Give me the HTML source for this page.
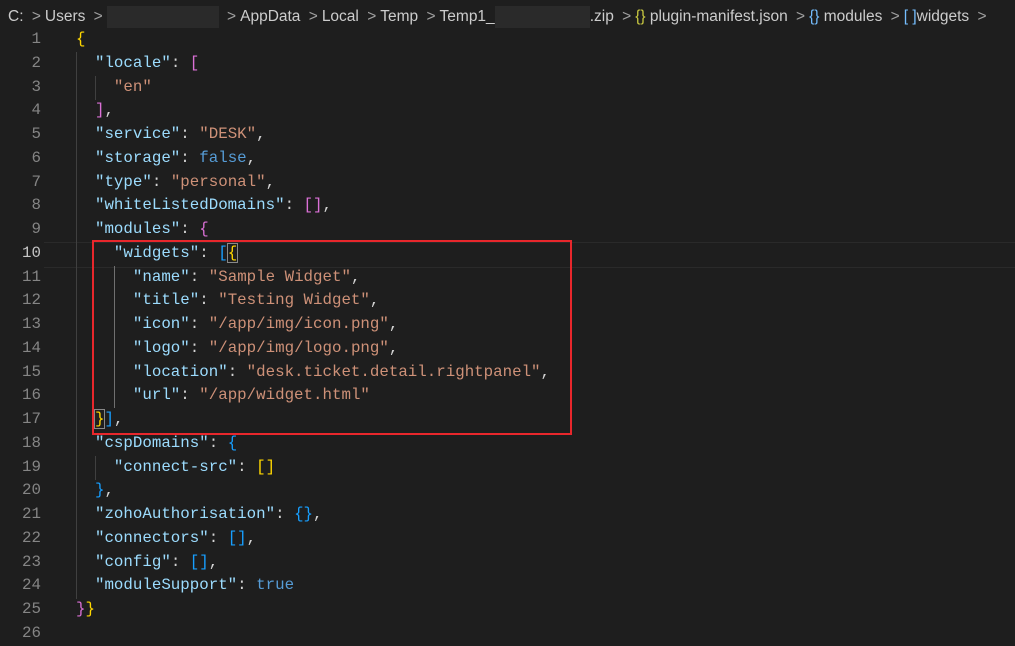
<!DOCTYPE html>
<html><head><meta charset="utf-8"><style>
html,body{margin:0;padding:0;background:#1e1e1e;width:1015px;height:630px;overflow:hidden}
.bc{position:absolute;top:5px;left:8px;height:24px;font:15.5px "Liberation Sans",sans-serif;color:#cccccc;white-space:nowrap;line-height:24px}
.bc .s{color:#a0a0a0;margin:0 4px}
.red{display:inline-block;width:112px;height:22px;background:#2a2a2a;vertical-align:middle}
.code{position:absolute;top:28px;left:0;font:15.8px "Liberation Mono",monospace;line-height:23.75px}
.ln{position:absolute;left:0;width:41px;text-align:right;color:#858585}
.tx{position:absolute;left:76px;top:0;color:#d4d4d4;white-space:pre}
.k{color:#9cdcfe}.v{color:#ce9178}.b{color:#569cd6}
.g{color:#ffd700}.p{color:#da70d6}.u{color:#179fff}
.guide{position:absolute;width:1px;background:#404040}
</style></head><body>
<div class="bc">C: <span class="s">&gt;</span>Users <span class="s">&gt;</span><span class="red"></span> <span class="s">&gt;</span>AppData <span class="s">&gt;</span>Local <span class="s">&gt;</span>Temp <span class="s">&gt;</span>Temp1_<span class="red" style="width:95px"></span>.zip <span class="s">&gt;</span><span style="color:#cbcb41">{}</span> plugin-manifest.json <span class="s">&gt;</span><span style="color:#75beff">{}</span> modules <span class="s">&gt;</span><span style="color:#75beff">[ ]</span>widgets <span class="s">&gt;</span></div>
<div style="position:absolute;left:44px;top:242px;width:971px;height:24px;border-top:1px solid #2a2a2a;border-bottom:1px solid #2a2a2a"></div>
<div class="guide" style="left:76px;top:52px;height:547px"></div>
<div class="guide" style="left:95px;top:76px;height:24px"></div>
<div class="guide" style="left:114px;top:266px;height:142px;background:#707070"></div>
<div class="guide" style="left:95px;top:456px;height:24px"></div>
<div class="code"><div class="ln" style="top:0">1</div><div class="ln" style="top:23.75px">2</div><div class="ln" style="top:47.5px">3</div><div class="ln" style="top:71.25px">4</div><div class="ln" style="top:95px">5</div><div class="ln" style="top:118.75px">6</div><div class="ln" style="top:142.5px">7</div><div class="ln" style="top:166.25px">8</div><div class="ln" style="top:190px">9</div><div class="ln" style="top:213.75px;color:#c6c6c6">10</div><div class="ln" style="top:237.5px">11</div><div class="ln" style="top:261.25px">12</div><div class="ln" style="top:285px">13</div><div class="ln" style="top:308.75px">14</div><div class="ln" style="top:332.5px">15</div><div class="ln" style="top:356.25px">16</div><div class="ln" style="top:380px">17</div><div class="ln" style="top:403.75px">18</div><div class="ln" style="top:427.5px">19</div><div class="ln" style="top:451.25px">20</div><div class="ln" style="top:475px">21</div><div class="ln" style="top:498.75px">22</div><div class="ln" style="top:522.5px">23</div><div class="ln" style="top:546.25px">24</div><div class="ln" style="top:570px">25</div><div class="ln" style="top:593.75px">26</div><div class="tx"><span class="g">{</span>
  <span class="k">"locale"</span>: <span class="p">[</span>
    <span class="v">"en"</span>
  <span class="p">]</span>,
  <span class="k">"service"</span>: <span class="v">"DESK"</span>,
  <span class="k">"storage"</span>: <span class="b">false</span>,
  <span class="k">"type"</span>: <span class="v">"personal"</span>,
  <span class="k">"whiteListedDomains"</span>: <span class="p">[]</span>,
  <span class="k">"modules"</span>: <span class="p">{</span>
    <span class="k">"widgets"</span>: <span class="u">[</span><span class="g" style="outline:1px solid #888">{</span>
      <span class="k">"name"</span>: <span class="v">"Sample Widget"</span>,
      <span class="k">"title"</span>: <span class="v">"Testing Widget"</span>,
      <span class="k">"icon"</span>: <span class="v">"/app/img/icon.png"</span>,
      <span class="k">"logo"</span>: <span class="v">"/app/img/logo.png"</span>,
      <span class="k">"location"</span>: <span class="v">"desk.ticket.detail.rightpanel"</span>,
      <span class="k">"url"</span>: <span class="v">"/app/widget.html"</span>
  <span class="g" style="outline:1px solid #888">}</span><span class="u">]</span>,
  <span class="k">"cspDomains"</span>: <span class="u">{</span>
    <span class="k">"connect-src"</span>: <span class="g">[]</span>
  <span class="u">}</span>,
  <span class="k">"zohoAuthorisation"</span>: <span class="u">{}</span>,
  <span class="k">"connectors"</span>: <span class="u">[]</span>,
  <span class="k">"config"</span>: <span class="u">[]</span>,
  <span class="k">"moduleSupport"</span>: <span class="b">true</span>
<span class="p">}</span><span class="g">}</span></div></div>
<div style="position:absolute;left:92px;top:240px;width:476px;height:191px;border:2px solid #e8272c"></div>
</body></html>
